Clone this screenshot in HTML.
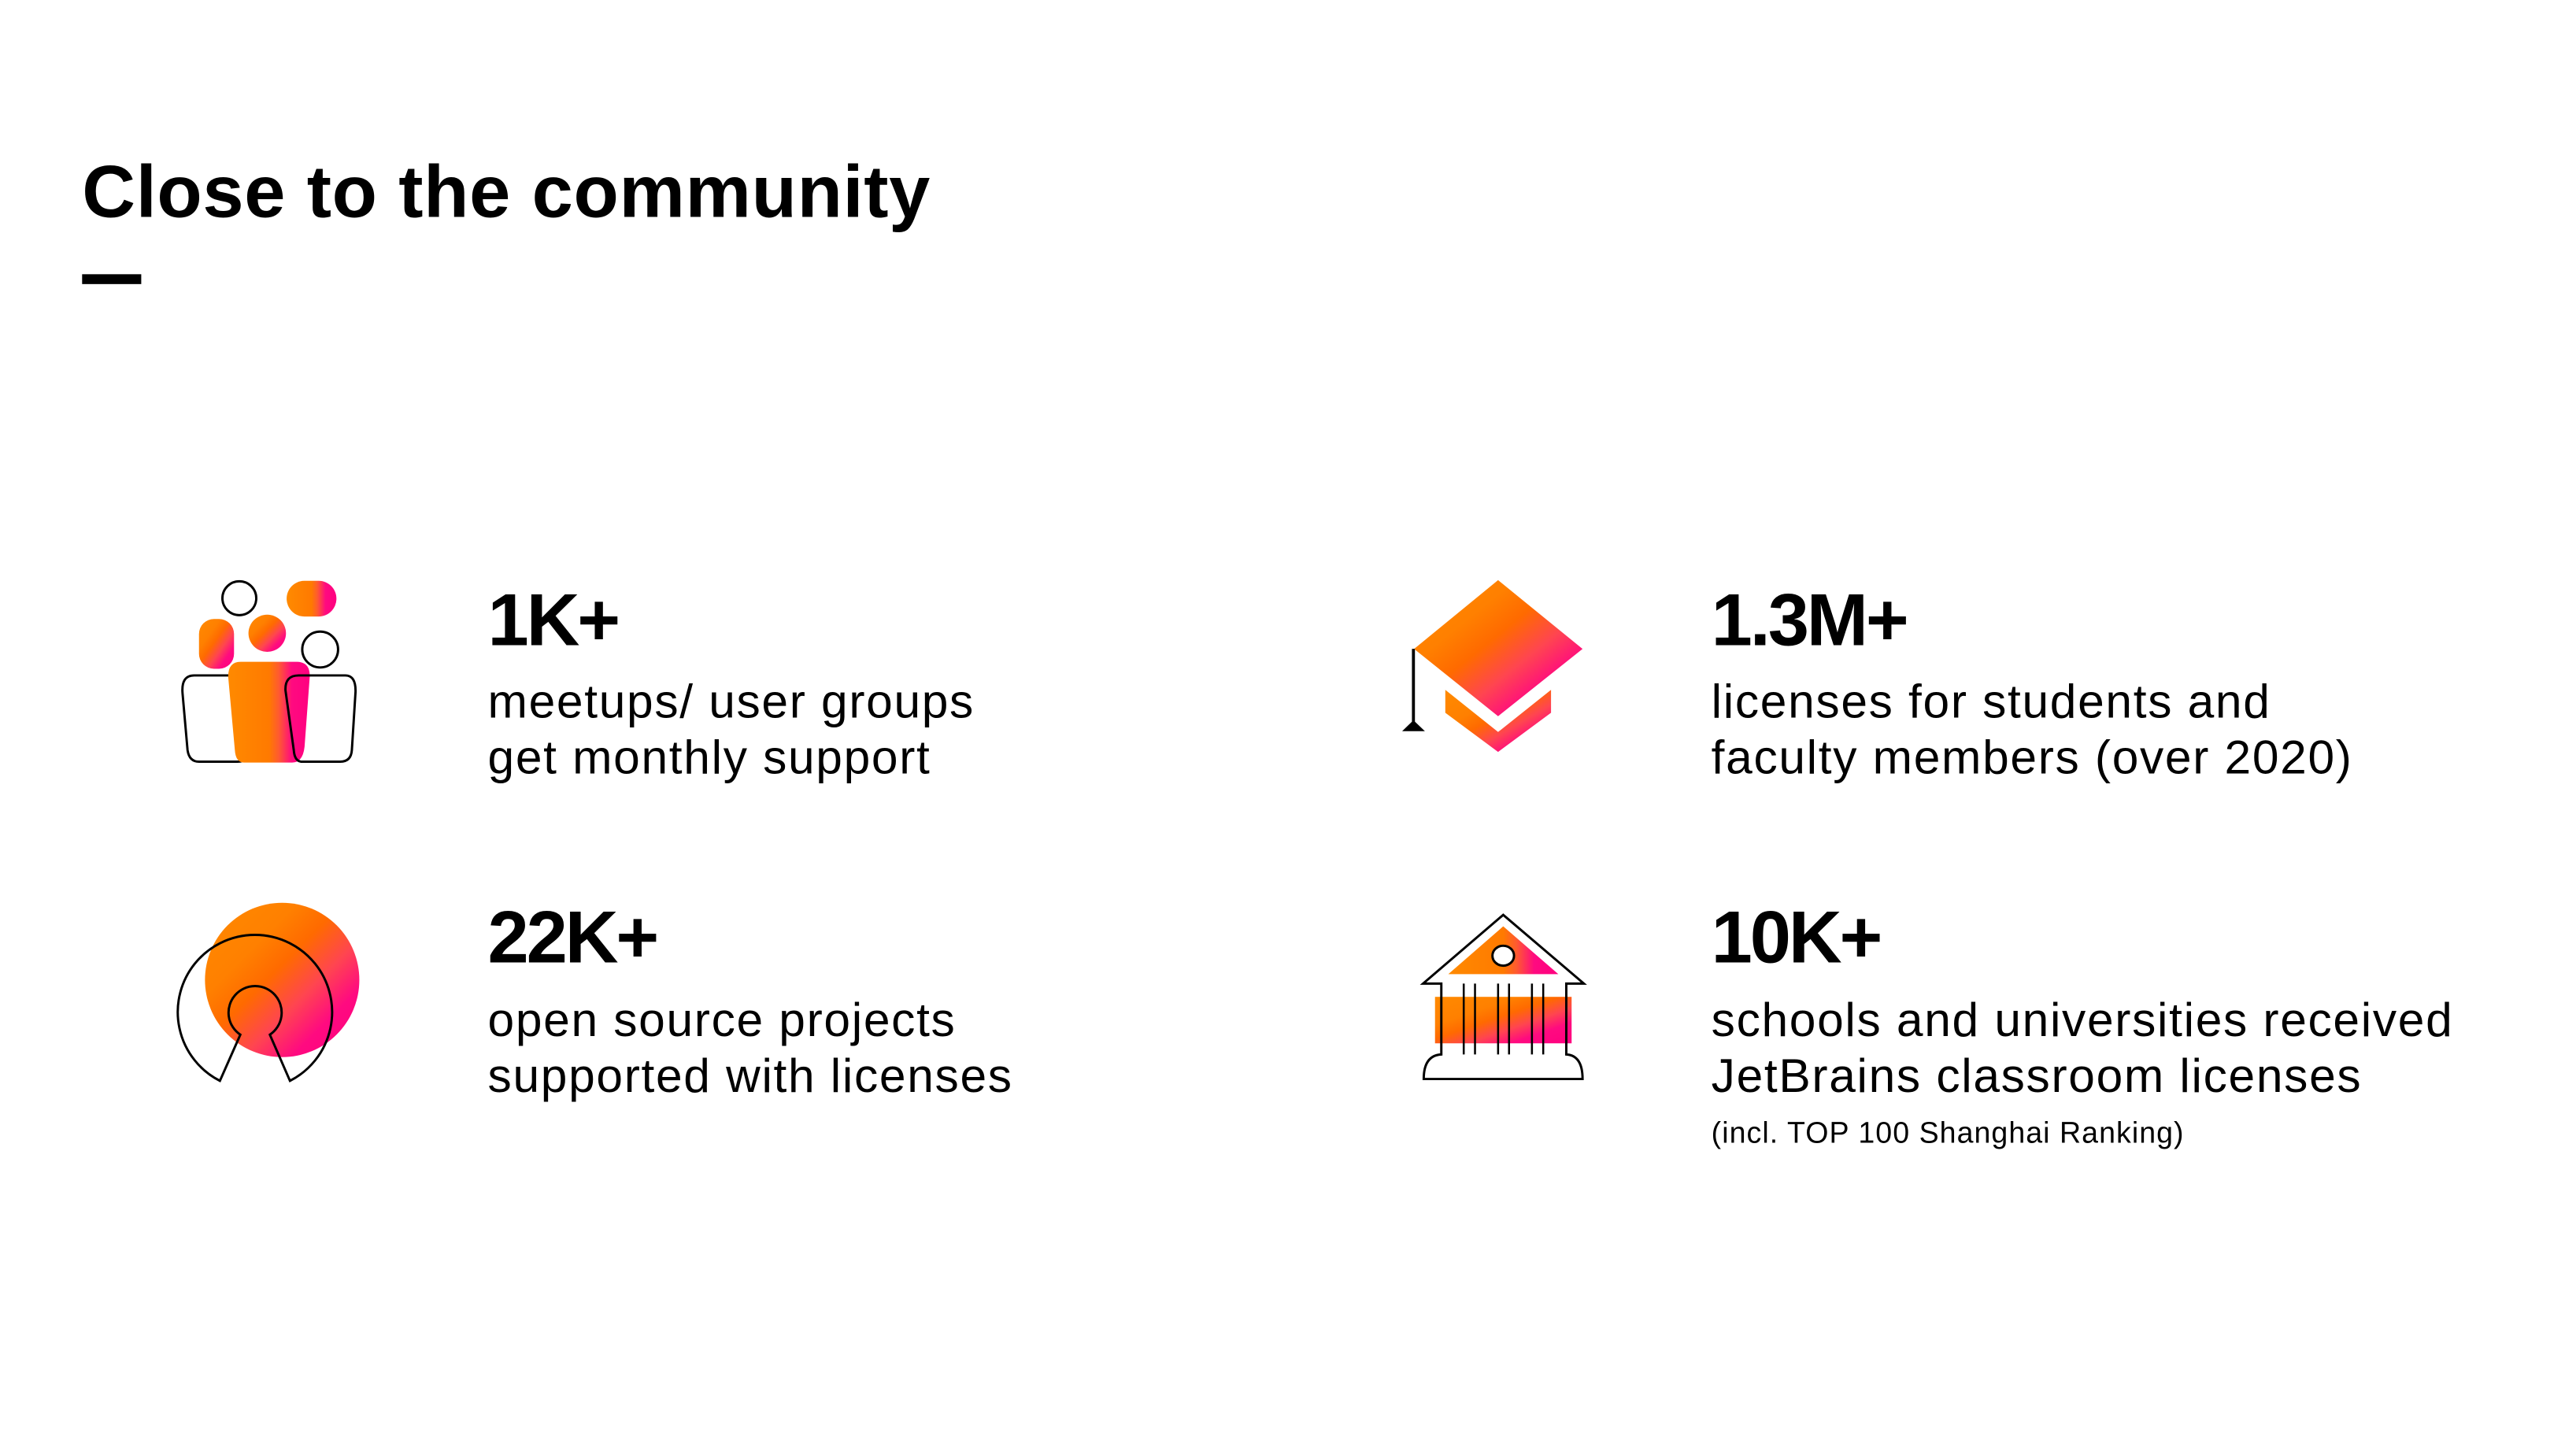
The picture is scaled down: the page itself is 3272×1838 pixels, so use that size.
<!DOCTYPE html>
<html><head><meta charset="utf-8"><style>
html,body{margin:0;padding:0;background:#fff;width:3272px;height:1838px;overflow:hidden}
svg{display:block}
text{font-family:"Liberation Sans",sans-serif;fill:#000}
.t{font-weight:bold;font-size:45px;letter-spacing:0.3px}
.n{font-weight:bold;font-size:45px;letter-spacing:-1.5px}
.b{font-size:29px;letter-spacing:0.8px}
.s{font-size:18px;letter-spacing:0.5px}
</style></head><body>
<svg width="3272" height="1838" viewBox="0 0 1568.5 881.2" preserveAspectRatio="none" xmlns="http://www.w3.org/2000/svg">
<defs>
<linearGradient id="h" x1="0" y1="0" x2="1" y2="0">
<stop offset="0" stop-color="#ff8a00"/><stop offset="0.5" stop-color="#ff7a00"/><stop offset="0.62" stop-color="#ff5a30"/><stop offset="0.78" stop-color="#ff0a80"/><stop offset="1" stop-color="#ff0080"/></linearGradient>
<linearGradient id="d" x1="0" y1="0" x2="1" y2="1">
<stop offset="0" stop-color="#ff8a00"/><stop offset="0.3" stop-color="#ff8000"/><stop offset="0.45" stop-color="#ff6a00"/><stop offset="0.62" stop-color="#ff4550"/><stop offset="0.78" stop-color="#ff0a80"/><stop offset="1" stop-color="#ff0080"/></linearGradient>
</defs>
<rect width="1568.5" height="881.2" fill="#fff"/>
<text class="t" x="50" y="132">Close to the community</text>
<rect x="50" y="167" width="36" height="6" fill="#000"/>

<g transform="scale(1.0106)">
<!-- people icon -->
<g stroke="#000" stroke-width="1.4" fill="none">
<circle cx="144.2" cy="360.5" r="10.2"/>
<circle cx="192.9" cy="391.4" r="10.8"/>
<path d="M117 407 H150 Q155 407 154 415 L151 452 Q150 459 143 459 H120 Q114 459 113 452 L110 418 Q109 407 117 407 Z"/>
</g>
<rect x="172.7" y="350" width="30" height="21.5" rx="10.7" fill="url(#h)"/>
<rect x="119.9" y="373" width="21.1" height="30" rx="9" fill="url(#d)"/>
<ellipse cx="161" cy="381.6" rx="11.3" ry="11.2" fill="url(#d)"/>
<path d="M145 398.8 H179 Q187 399 186.6 408 L183.5 450 Q182.5 459.5 176 459.5 H147 Q142 459.5 141.5 452 L137.5 408 Q137.3 398.8 145 398.8 Z" fill="url(#h)"/>
<path d="M180 407 H208 Q214.5 407 214.2 417 L212 452 Q211.5 459 205 459 H182 Q177.5 459 177 452 L172 416 Q171.6 407 180 407 Z" fill="none" stroke="#000" stroke-width="1.4"/>

<!-- open source icon -->
<circle cx="170" cy="590.5" r="46.5" fill="url(#d)"/>
<path d="M144.8 623.5 A16 16 0 1 1 162.6 623.5 L174.7 651.3 A46.5 46.5 0 1 0 132.5 651.3 Z" fill="none" stroke="#000" stroke-width="1.4"/>

<!-- cap icon -->
<polygon points="902.6,349.6 953.5,391 902.6,431.6 852,391" fill="url(#d)"/>
<polygon points="870.8,415.7 902.6,441.1 934.5,415.7 934.5,429.5 902.6,453.1 870.8,429.5" fill="url(#d)"/>
<rect x="850.7" y="391" width="1.8" height="44" fill="#000"/>
<polygon points="851.6,434 858.5,440.6 844.8,440.6" fill="#000"/>

<!-- building icon -->
<g transform="translate(0,-6)">
<polygon points="905.7,564.2 938.9,593 872.6,593" fill="url(#h)"/>
<rect x="864.6" y="606.7" width="82.3" height="28" fill="url(#d)"/>
<ellipse cx="905.7" cy="581.9" rx="6.5" ry="6" fill="#fff" stroke="#000" stroke-width="1.4"/>
<path d="M857.4 598.7 L905.7 557.3 L954.3 598.7 H943.7 V641.4 Q953.5 642 953.5 656.2 H857.8 Q857.8 642 868.4 641.4 V598.7 Z" fill="none" stroke="#000" stroke-width="1.4"/>
<g stroke="#000" stroke-width="1.2">
<line x1="881.9" y1="598.7" x2="881.9" y2="641.4"/><line x1="888.7" y1="598.7" x2="888.7" y2="641.4"/>
<line x1="902.6" y1="598.7" x2="902.6" y2="641.4"/><line x1="909.2" y1="598.7" x2="909.2" y2="641.4"/>
<line x1="923" y1="598.7" x2="923" y2="641.4"/><line x1="929.8" y1="598.7" x2="929.8" y2="641.4"/>
</g>
</g>
</g>

<!-- texts -->
<text class="n" x="297" y="393">1K+</text>
<text class="b" x="297" y="437">meetups/ user groups</text>
<text class="b" x="297" y="471">get monthly support</text>

<text class="n" x="297" y="586">22K+</text>
<text class="b" x="297" y="631">open source projects</text>
<text class="b" x="297" y="665">supported with licenses</text>

<text class="n" x="1042" y="393">1.3M+</text>
<text class="b" x="1042" y="437">licenses for students and</text>
<text class="b" x="1042" y="471">faculty members (over 2020)</text>

<text class="n" x="1042" y="586">10K+</text>
<text class="b" x="1042" y="631">schools and universities received</text>
<text class="b" x="1042" y="665">JetBrains classroom licenses</text>
<text class="s" x="1042" y="696">(incl. TOP 100 Shanghai Ranking)</text>
</svg>
</body></html>
